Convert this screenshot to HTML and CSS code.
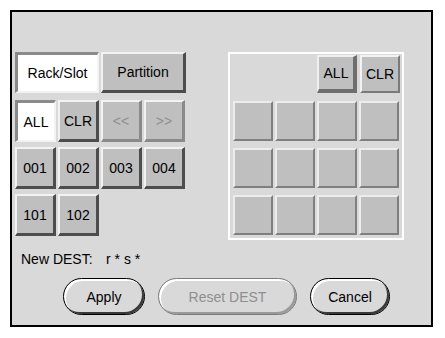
FILE: index.html
```html
<!DOCTYPE html>
<html lang="en">
<head>
    <meta charset="UTF-8">
    <title>Select DEST</title>
    <link rel="stylesheet" href="styles.css">
</head>
<body>
    <div class="frame">
        <div class="main">
            <div class="left">
                <div class="row">
                    <button class="btn tab on">Rack/Slot</button>
                    <button class="btn tab raised dark">Partition</button>
                </div>
                <div class="row">
                    <button class="btn sq on">ALL</button>
                    <button class="btn sq raised dark">CLR</button>
                    <button class="btn sq raised off">&lt;&lt;</button>
                    <button class="btn sq raised off">&gt;&gt;</button>
                </div>
                <div class="row">
                    <button class="btn sq raised dark">001</button>
                    <button class="btn sq raised dark">002</button>
                    <button class="btn sq raised dark">003</button>
                    <button class="btn sq raised dark">004</button>
                </div>
                <div class="row">
                    <button class="btn sq raised dark">101</button>
                    <button class="btn sq raised dark">102</button>
                </div>
            </div>
            <div class="panel">
                <div class="panel-head">
                    <button class="btn small raised dark">ALL</button>
                    <button class="btn small raised">CLR</button>
                </div>
                <div class="cells">
                    <div class="cell"></div><div class="cell"></div><div class="cell"></div><div class="cell"></div>
                    <div class="cell"></div><div class="cell"></div><div class="cell"></div><div class="cell"></div>
                    <div class="cell"></div><div class="cell"></div><div class="cell"></div><div class="cell"></div>
                </div>
            </div>
        </div>
        <div class="dest">
            <span class="dest-label">New DEST:</span>
            <span>r * s *</span>
        </div>
        <div class="actions">
            <button class="pill apply">Apply</button>
            <button class="pill reset" disabled>Reset DEST</button>
            <button class="pill cancel">Cancel</button>
        </div>
    </div>
</body>
</html>
```

FILE: styles.css
```css
body {
    margin: 0;
    background: #ffffff;
    font-family: "Liberation Sans", Arial, sans-serif;
    font-size: 14px;
    color: #000;
}

.frame {
    margin: 10px 0 0 10px;
    width: 423px;
    height: 317px;
    box-sizing: border-box;
    border: 2px solid #000;
    background: #d9d9d9;
    padding: 40px 0 0 3px;
}

.main {
    display: flex;
    gap: 42px;
}

.left {
    display: flex;
    flex-direction: column;
    gap: 5px;
}

.left .row:first-child {
    margin-bottom: 2px;
}

.row {
    display: flex;
    gap: 2px;
}

.btn {
    font-family: inherit;
    font-size: 14px;
    color: #000;
    padding: 0;
    margin: 0;
    box-sizing: border-box;
    background: #bfbfbf;
    border: 2px solid;
    cursor: pointer;
}

.tab {
    height: 41px;
}

.tab.on {
    width: 84px;
}

.tab.raised {
    width: 85px;
}

.sq {
    width: 41px;
    height: 42px;
}

.on {
    background: #ffffff;
    border-color: #8a8a8a #f2f2f2 #f2f2f2 #8a8a8a;
    border-width: 3px 2px 2px 3px;
}

.raised {
    border-color: #f2f2f2 #7a7a7a #7a7a7a #f2f2f2;
}

.raised.dark {
    border-color: #f2f2f2 #4d4d4d #4d4d4d #f2f2f2;
    border-width: 2px 3px 3px 2px;
}

.raised.off {
    color: #8f8f8f;
    border-color: #f2f2f2 #8a8a8a #8a8a8a #f2f2f2;
    border-width: 2px 3px 3px 2px;
}

.panel {
    width: 176px;
    height: 188px;
    box-sizing: border-box;
    border: 2px solid #ffffff;
    padding: 1px 2px 0 3px;
}

.panel-head {
    display: flex;
    justify-content: flex-end;
    gap: 3px;
    margin-bottom: 8px;
}

.small {
    width: 40px;
    height: 38px;
}

.panel-head .raised.dark {
    border-color: #efefef #6e6e6e #6e6e6e #efefef;
    border-width: 2px 4px 4px 2px;
}

.cells {
    display: grid;
    grid-template-columns: repeat(4, 40px);
    grid-auto-rows: 40px;
    column-gap: 2px;
    row-gap: 7px;
}

.cell {
    background: #bfbfbf;
    box-sizing: border-box;
    border: 2px solid;
    border-color: #ececec #7f7f7f #7f7f7f #ececec;
}

.dest {
    display: flex;
    margin-top: 11px;
    padding-left: 6px;
    line-height: 16px;
}

.dest-label {
    width: 85px;
}

.actions {
    display: flex;
    gap: 13px;
    margin-top: 11px;
    padding-left: 48px;
}

.pill {
    font-family: inherit;
    font-size: 14px;
    height: 37px;
    padding: 0;
    box-sizing: border-box;
    border: 1px solid #000;
    border-radius: 19px;
    background: #d9d9d9;
    box-shadow: inset 2px 2px 0 #ffffff, inset -2px -2px 0 #3a3a3a;
    color: #000;
    cursor: pointer;
}

.apply {
    width: 82px;
}

.reset {
    width: 139px;
    color: #8f8f8f;
    border-color: #7a7a7a;
    box-shadow: inset 2px 2px 0 #ffffff, inset -2px -2px 0 #9a9a9a;
}

.cancel {
    width: 80px;
}
```
